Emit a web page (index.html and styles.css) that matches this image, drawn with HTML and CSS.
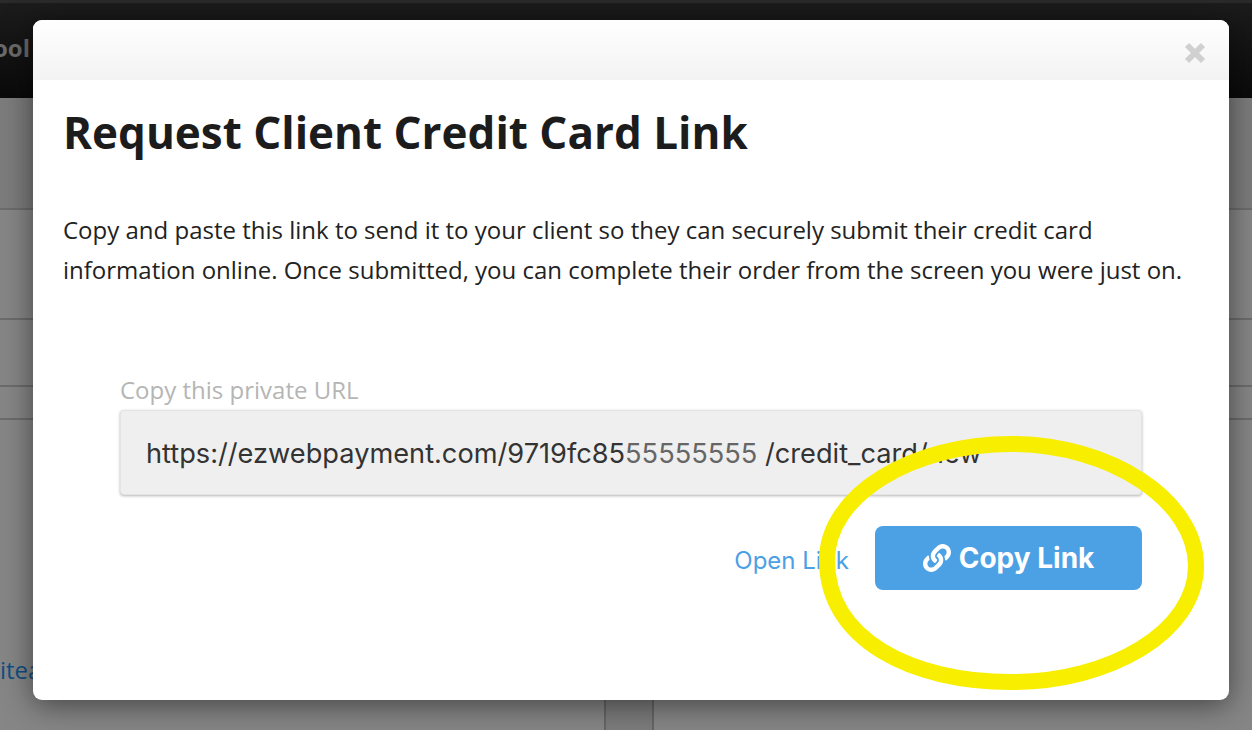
FILE: index.html
```html
<!DOCTYPE html>
<html lang="en">
<head>
    <meta charset="UTF-8">
    <title>Request Client Credit Card Link</title>
    <link rel="stylesheet" href="styles.css">
</head>
<body>
    <div class="page">
        <div class="topbar"><span class="brand">ool</span></div>
        <div class="band band-one"></div>
        <div class="band band-two"></div>
        <div class="band band-three"></div>
        <div class="band band-four"></div>
        <div class="band band-five">
            <span class="item-link">itea</span>
            <div class="thumb"></div>
        </div>
    </div>

    <div class="modal">
        <div class="modal-header">
            <svg class="close" viewBox="0 0 22 22" width="22" height="22">
                <path d="M3 3 L19 19 M19 3 L3 19" stroke="#d0d0d0" stroke-width="6" fill="none"/>
            </svg>
        </div>
        <div class="modal-body">
            <h1>Request Client Credit Card Link</h1>
            <p>Copy and paste this link to send it to your client so they can securely submit their credit card information online. Once submitted, you can complete their order from the screen you were just on.</p>
            <div class="url-block">
                <label>Copy this private URL</label>
                <div class="url-box">https://ezwebpayment.com/9719fc85<span class="masked">55555555</span> /credit_card/new</div>
                <div class="actions">
                    <a class="open-link" href="#">Open Link</a>
                    <a class="copy-btn" href="#">
                        <svg viewBox="0 0 512 512" width="28" height="28">
                            <path fill="#fff" d="M326.6 185.4c59.7 59.8 58.9 155.7.4 214.6l-67.2 67.2c-59.3 59.3-155.7 59.3-215 0-59.3-59.3-59.3-155.7 0-215l37.1-37.1c9.8-9.8 26.8-3.3 27.3 10.6.6 17.7 3.8 35.5 9.7 52.7 2 5.8.6 12.3-3.8 16.6l-13.1 13.1c-28 28-28.9 73.7-1.2 102 28 28.5 74 28.7 102.2.5l67.2-67.2c28.2-28.2 28.1-73.8 0-101.8-3.7-3.7-7.4-6.6-10.3-8.6-4.1-2.8-6.6-7.4-6.8-12.4-.4-10.6 3.4-21.5 11.7-29.8l21.1-21.1c5.5-5.5 14.2-6.2 20.6-1.7 7.3 5.1 14.2 10.9 20.5 17.2zM467.5 44.4c-59.3-59.3-155.7-59.3-215 0l-67.2 67.2c-.1.1-.3.3-.4.4-58.5 58.9-59.3 154.8.4 214.6 6.3 6.3 13.2 12.1 20.5 17.2 6.4 4.5 15.1 3.8 20.6-1.7l21.1-21.1c8.3-8.3 12.1-19.2 11.7-29.8-.2-5-2.7-9.6-6.8-12.4-2.9-2-6.6-4.9-10.3-8.6-28.1-28-28.2-73.6 0-101.8l67.2-67.2c28.2-28.2 74.2-28 102.2.5 27.7 28.3 26.8 74-1.2 102l-13.1 13.1c-4.4 4.3-5.8 10.8-3.8 16.6 5.9 17.2 9.1 35 9.7 52.7.5 13.9 17.5 20.4 27.3 10.6l37.1-37.1c59.3-59.3 59.3-155.7 0-215z"/>
                        </svg>
                        <span>Copy Link</span>
                    </a>
                </div>
            </div>
        </div>
    </div>

    <!-- highlight drawn over the screenshot -->
    <svg class="highlight" viewBox="0 0 1252 730" width="1252" height="730">
        <path d="M1011 444 C1110 444 1196 500 1196 566 C1196 632 1110 682 1011 682 C912 682 827 640 827 560 C827 495 912 444 1011 444 Z" fill="none" stroke="#f8ee00" stroke-width="16"/>
    </svg>
</body>
</html>
```

FILE: styles.css
```css
* {
    margin: 0;
    padding: 0;
    box-sizing: border-box;
}

body {
    width: 1252px;
    height: 730px;
    overflow: hidden;
    font-family: "Open Sans", sans-serif;
    background: #868686;
}

.page {
    height: 730px;
    display: flex;
    flex-direction: column;
}

.topbar {
    height: 98px;
    background: linear-gradient(#1c1c1c, #0a0a0a);
    border-top: 3px solid #2a2a2a;
    padding-top: 28px;
}

.brand {
    display: block;
    width: 30px;
    overflow: hidden;
    direction: rtl;
    font-size: 24px;
    font-weight: 700;
    color: #6a6a6a;
}

.band {
    border-bottom: 2px solid #6c6c6c;
}

.band-one {
    height: 112px;
    background: #7c7c7c;
}

.band-two {
    height: 110px;
}

.band-three {
    height: 67px;
}

.band-four {
    height: 33px;
}

.band-five {
    flex: 1;
    border-bottom: none;
    position: relative;
}

.item-link {
    position: absolute;
    top: 233px;
    left: 0;
    font-size: 24px;
    color: #0f4f84;
}

.thumb {
    position: absolute;
    left: 604px;
    top: 200px;
    width: 50px;
    height: 120px;
    background: #7c7c7c;
    border-left: 2px solid #666;
    border-right: 2px solid #666;
}

.modal {
    position: absolute;
    left: 33px;
    top: 20px;
    width: 1196px;
    height: 680px;
    background: #fff;
    border-radius: 9px;
    box-shadow: 0 5px 30px rgba(0, 0, 0, 0.5);
    overflow: hidden;
}

.modal-header {
    height: 60px;
    background: linear-gradient(#fff, #f3f3f3);
    display: flex;
    justify-content: flex-end;
    align-items: center;
    padding-right: 23px;
}

.close {
    margin-top: 6px;
}

.modal-body {
    padding: 24px 30px 0;
}

h1 {
    font-size: 44px;
    line-height: 56px;
    font-weight: 700;
    color: #1c1c1c;
}

p {
    margin-top: 50px;
    font-size: 24px;
    line-height: 40px;
    color: #222;
}

.url-block {
    margin: 85px 57px 0;
}

label {
    display: block;
    font-size: 24px;
    line-height: 30px;
    color: #b5b5b5;
}

.url-box {
    margin-top: 5px;
    height: 85px;
    line-height: 86px;
    padding-left: 25px;
    background: #efefef;
    border: 1px solid #e4e4e4;
    border-radius: 4px;
    box-shadow: 0 1px 3px rgba(0, 0, 0, 0.3);
    font-family: Inter, sans-serif;
    font-size: 27.2px;
    color: #333;
    white-space: nowrap;
}

.masked {
    color: #666;
}

.actions {
    display: flex;
    justify-content: flex-end;
    align-items: center;
    gap: 26px;
    margin-top: 31px;
}

.open-link {
    padding-top: 4px;
    font-family: Inter, sans-serif;
    font-size: 24px;
    color: #4ca0e4;
    text-decoration: none;
}

.copy-btn {
    width: 267px;
    height: 64px;
    display: flex;
    justify-content: center;
    align-items: center;
    gap: 8px;
    background: #4ca0e4;
    border-radius: 8px;
    font-family: Inter, sans-serif;
    font-size: 28px;
    font-weight: 700;
    color: #fff;
    text-decoration: none;
}

.highlight {
    position: absolute;
    left: 0;
    top: 0;
}
```
